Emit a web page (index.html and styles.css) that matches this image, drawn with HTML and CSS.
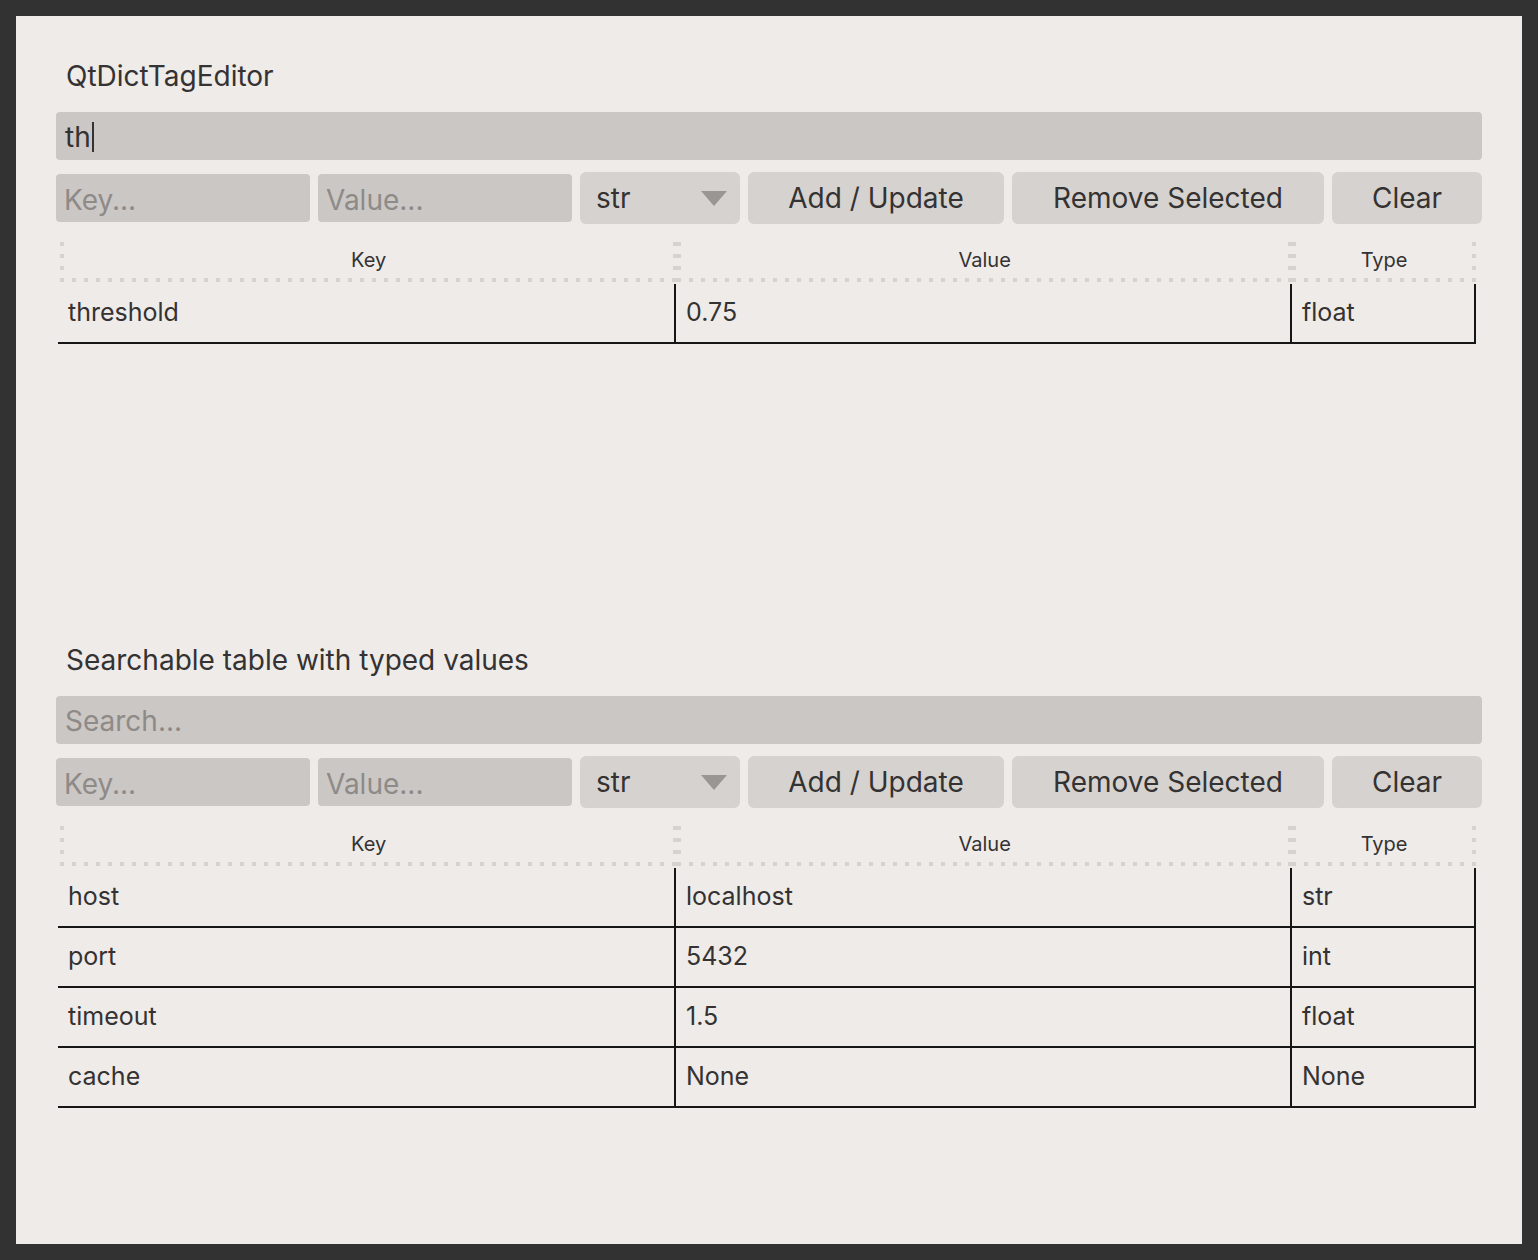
FILE: index.html
```html
<!DOCTYPE html>
<html lang="en">
<head>
    <meta charset="UTF-8">
    <title>QtDictTagEditor</title>
    <link rel="stylesheet" href="styles.css">
</head>
<body>
<div class="panel">

    <div class="section">
        <div class="title">QtDictTagEditor</div>
        <div class="search">th<span class="caret"></span></div>
        <div class="controls">
            <input class="field key" placeholder="Key...">
            <input class="field value" placeholder="Value...">
            <div class="combo">str<span class="arrow"></span></div>
            <button class="btn add">Add / Update</button>
            <button class="btn remove">Remove Selected</button>
            <button class="btn clear">Clear</button>
        </div>
        <div class="table">
            <div class="thead"><div class="th">Key</div><div class="th">Value</div><div class="th">Type</div></div>
            <div class="tr"><div class="td">threshold</div><div class="td">0.75</div><div class="td">float</div></div>
        </div>
    </div>

    <div class="section">
        <div class="title">Searchable table with typed values</div>
        <input class="search" placeholder="Search...">
        <div class="controls">
            <input class="field key" placeholder="Key...">
            <input class="field value" placeholder="Value...">
            <div class="combo">str<span class="arrow"></span></div>
            <button class="btn add">Add / Update</button>
            <button class="btn remove">Remove Selected</button>
            <button class="btn clear">Clear</button>
        </div>
        <div class="table">
            <div class="thead"><div class="th">Key</div><div class="th">Value</div><div class="th">Type</div></div>
            <div class="tr"><div class="td">host</div><div class="td">localhost</div><div class="td">str</div></div>
            <div class="tr"><div class="td">port</div><div class="td">5432</div><div class="td">int</div></div>
            <div class="tr"><div class="td">timeout</div><div class="td">1.5</div><div class="td">float</div></div>
            <div class="tr"><div class="td">cache</div><div class="td">None</div><div class="td">None</div></div>
        </div>
    </div>

</div>
</body>
</html>
```

FILE: styles.css
```css
*{ box-sizing:border-box; }
html, body{ margin:0; padding:0; }
body{ background:#323232; padding:16px; font-family:Inter, "Liberation Sans", sans-serif; color:#343232; }

.panel{ width:1506px; height:1228px; background:#efebe8; padding:42px 40px 0 40px; }
.section{ height:584px; display:flex; flex-direction:column; }

.title{ height:36px; line-height:36px; font-size:28px; padding-left:10px; }

.search{ margin-top:18px; height:48px; width:100%; border:none; outline:none; border-radius:4px; background:#cbc7c5; padding:2px 9px 0 9px; font:28px Inter, "Liberation Sans", sans-serif; color:#343232; display:flex; align-items:center; }
.search::placeholder{ color:#8e8a88; }
.caret{ display:inline-block; width:2px; height:30px; background:#343232; margin-left:1px; }

.controls{ margin-top:12px; height:52px; display:flex; align-items:center; gap:8px; }
.field{ height:48px; border:none; outline:none; border-radius:4px; background:#cbc7c5; padding:3px 8px 0 8px; font:28px Inter, "Liberation Sans", sans-serif; color:#343232; }
.field::placeholder{ color:#8e8a88; }
.field.key, .field.value{ width:254px; }

.combo{ width:160px; height:52px; border-radius:6px; background:#d6d2cf; font-size:28px; padding:0 13px 0 16px; display:flex; align-items:center; justify-content:space-between; }
.arrow{ width:0; height:0; border-left:13px solid transparent; border-right:13px solid transparent; border-top:15px solid #9a9694; }

.btn{ height:52px; border:none; border-radius:6px; background:#d6d2cf; font:28px Inter, "Liberation Sans", sans-serif; color:#343232; padding:0; }
.btn.add{ width:256px; }
.btn.remove{ width:312px; }
.btn.clear{ width:150px; }

.table{ margin-top:18px; margin-left:2px; width:1418px; }
.thead{ display:flex; height:40px; margin-left:2px; margin-bottom:2px; }
.th{ font-size:20px; text-align:center; line-height:36px;
     background:
        linear-gradient(to bottom, #d6d2cf 0 4px, transparent 4px 12px) left top / 4px 12px repeat-y,
        linear-gradient(to bottom, #d6d2cf 0 4px, transparent 4px 12px) right top / 4px 12px repeat-y,
        linear-gradient(to right, #d6d2cf 0 4px, transparent 4px 12px) left bottom / 12px 4px repeat-x; }
.tr{ display:flex; height:60px; border-bottom:2px solid #161616; }
.td{ font-size:25px; padding-left:10px; line-height:56px; border-right:2px solid #161616; }
.th:nth-child(1), .td:nth-child(1){ width:618px; }
.th:nth-child(2), .td:nth-child(2){ width:616px; }
.th:nth-child(3), .td:nth-child(3){ width:184px; }
```
